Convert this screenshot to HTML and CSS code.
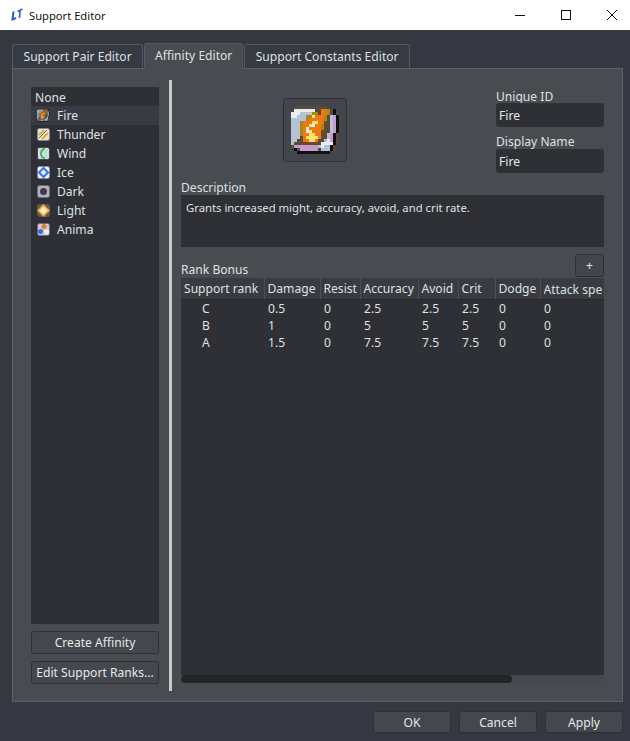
FILE: index.html
```html
<!DOCTYPE html>
<html lang="en">
<head>
  <meta charset="UTF-8">
  <title>Support Editor</title>
  <link rel="stylesheet" href="styles.css">
</head>
<body>
  <div class="titlebar">
    <svg class="app-icon" viewBox="0 0 14 14" width="14" height="14">
      <path d="M3.5 3.5 L2.5 11.5 L6 10" fill="none" stroke="#2a5bd7" stroke-width="2"/>
      <path d="M7.5 3.5 L12.5 1 M10 2.5 L9.5 10" fill="none" stroke="#2a6ad7" stroke-width="1.7"/>
    </svg>
    <span class="title">Support Editor</span>
    <div class="win-buttons">
      <svg viewBox="0 0 12 12" width="12" height="12"><path d="M1 6.5H11" stroke="#111" fill="none"/></svg>
      <svg viewBox="0 0 12 12" width="12" height="12"><rect x="1.5" y="1.5" width="9" height="9" stroke="#111" fill="none"/></svg>
      <svg viewBox="0 0 12 12" width="12" height="12"><path d="M1 1L11 11M11 1L1 11" stroke="#111" fill="none"/></svg>
    </div>
  </div>

  <div class="window">
    <div class="tabs">
      <div class="tab">Support Pair Editor</div>
      <div class="tab active">Affinity Editor</div>
      <div class="tab">Support Constants Editor</div>
    </div>

    <div class="pane">
      <div class="left">
        <ul class="list">
          <li class="none">None</li>
          <li class="selected"><svg class="swatch pixel-fire" viewBox="0 0 16 16"></svg>Fire</li>
          <li>
            <svg class="swatch" viewBox="0 0 13 13">
              <rect x="0.5" y="0.5" width="12" height="12" rx="2" fill="#e9e4d8" stroke="#8d8794"/>
              <path d="M2 7L7 2M5 11L11 5" stroke="#d8b23c" stroke-width="2"/>
              <path d="M2 10L10 2" stroke="#6b5a3a"/>
            </svg>Thunder
          </li>
          <li>
            <svg class="swatch" viewBox="0 0 13 13">
              <rect x="0.5" y="0.5" width="12" height="12" rx="2" fill="#ded8ea" stroke="#44445a"/>
              <path d="M8 1.5C2.5 3.5 2.5 9.5 8 11.5" fill="none" stroke="#38c060" stroke-width="2"/>
              <path d="M11 3C7 5 7 8 11 10" fill="none" stroke="#a6e8b0" stroke-width="1.5"/>
            </svg>Wind
          </li>
          <li>
            <svg class="swatch" viewBox="0 0 13 13">
              <rect x="0.5" y="0.5" width="12" height="12" rx="2" fill="#f0f2fa" stroke="#8088a8"/>
              <path d="M6.5 0.5L12.5 6.5L6.5 12.5L0.5 6.5Z" fill="#3a78e8"/>
              <path d="M6.5 3.5L9.5 6.5L6.5 9.5L3.5 6.5Z" fill="#e4eefc"/>
            </svg>Ice
          </li>
          <li>
            <svg class="swatch" viewBox="0 0 13 13">
              <rect x="0.5" y="0.5" width="12" height="12" rx="2" fill="#b6aec8" stroke="#70697c"/>
              <circle cx="6.5" cy="6.5" r="3.5" fill="#3f3a44"/>
            </svg>Dark
          </li>
          <li>
            <svg class="swatch" viewBox="0 0 13 13">
              <rect x="0.5" y="0.5" width="12" height="12" rx="2" fill="#6a5a50" stroke="#5c5660"/>
              <path d="M6.5 0L13 6.5L6.5 13L0 6.5Z" fill="#f0a83c"/>
              <path d="M6.5 2.5L10.5 6.5L6.5 10.5L2.5 6.5Z" fill="#fff2b8"/>
            </svg>Light
          </li>
          <li>
            <svg class="swatch" viewBox="0 0 13 13">
              <rect x="0.5" y="0.5" width="12" height="12" rx="2" fill="#cfc8da" stroke="#6f6a80"/>
              <circle cx="7" cy="3.5" r="2.5" fill="#e8782a"/>
              <circle cx="3.5" cy="8.5" r="2.5" fill="#2f6fe0"/>
              <circle cx="9.5" cy="9" r="2.5" fill="#f4efc8"/>
            </svg>Anima
          </li>
        </ul>
        <button class="btn">Create Affinity</button>
        <button class="btn">Edit Support Ranks...</button>
      </div>

      <div class="splitter"></div>

      <div class="right">
        <div class="top-row">
          <div class="icon-box">
            <svg class="pixel-fire crisp" viewBox="0 0 16 16" width="48" height="48"></svg>
          </div>
          <div class="id-fields">
            <label class="first">Unique ID</label>
            <input class="field" value="Fire">
            <label class="second">Display Name</label>
            <input class="field" value="Fire">
          </div>
        </div>

        <label>Description</label>
        <div class="desc">Grants increased might, accuracy, avoid, and crit rate.</div>

        <div class="rank-head">
          <label>Rank Bonus</label>
          <button class="plus">+</button>
        </div>

        <div class="table-box">
          <table>
            <thead>
              <tr>
                <th class="c0">Support rank</th>
                <th class="c1">Damage</th>
                <th class="c2">Resist</th>
                <th class="c3">Accuracy</th>
                <th class="c4">Avoid</th>
                <th class="c5">Crit</th>
                <th class="c6">Dodge</th>
                <th class="c7"><span class="clip">Attack spe</span></th>
              </tr>
            </thead>
            <tbody>
              <tr><td class="rank">C</td><td>0.5</td><td>0</td><td>2.5</td><td>2.5</td><td>2.5</td><td>0</td><td>0</td></tr>
              <tr><td class="rank">B</td><td>1</td><td>0</td><td>5</td><td>5</td><td>5</td><td>0</td><td>0</td></tr>
              <tr><td class="rank">A</td><td>1.5</td><td>0</td><td>7.5</td><td>7.5</td><td>7.5</td><td>0</td><td>0</td></tr>
            </tbody>
          </table>
          <div class="scroll"><div class="thumb"></div></div>
        </div>
      </div>
    </div>

    <div class="footer">
      <button class="btn wide">OK</button>
      <button class="btn wide">Cancel</button>
      <button class="btn wide">Apply</button>
    </div>
  </div>
  <script src="icons.js"></script>
</body>
</html>
```
FILE: styles.css
```css
* {
  box-sizing: border-box;
}

html,
body {
  margin: 0;
  height: 741px;
  overflow: hidden;
}

body {
  background-color: #353840;
  color: #dfe1e3;
  font-family: "Noto Sans", sans-serif;
  font-size: 12.1px;
}

.titlebar {
  display: flex;
  align-items: center;
  height: 30px;
  padding-left: 10px;
  background-color: #fff;
  color: #111;
  font-size: 11.2px;
}

.title {
  margin-left: 5px;
}

.win-buttons {
  display: flex;
  gap: 34px;
  margin-left: auto;
  margin-right: 12px;
}

.window {
  padding: 12px 7px 0 12px;
}

.tabs {
  display: flex;
  align-items: flex-end;
  height: 26px;
}

.tab {
  height: 24px;
  padding: 3px 10.5px 0;
  margin-right: 1px;
  background-color: #373a42;
  border: 1px solid #55585e;
  border-bottom: none;
  border-radius: 3px 3px 0 0;
}

.tab.active {
  position: relative;
  width: 99px;
  height: 26px;
  margin-bottom: -1px;
  padding: 3px 0 0;
  background-color: #484b50;
  text-align: center;
}

.pane {
  display: flex;
  height: 634px;
  padding: 11px 18px 10px;
  background-color: #484b50;
  border: 1px solid #5c5f64;
}

.left {
  display: flex;
  flex-direction: column;
  width: 128px;
  padding: 7px 0;
}

.list {
  flex: 1;
  margin: 0;
  padding: 0;
  list-style: none;
  background-color: #2e3036;
}

.list li {
  display: flex;
  align-items: center;
  height: 19px;
  padding-left: 4px;
}

.list .none {
  padding-top: 2px;
}

.list .selected {
  background-color: #383b43;
}

.swatch {
  flex: none;
  width: 13px;
  height: 13px;
  margin: 0 7px 0 2px;
}

.btn {
  height: 23px;
  margin-top: 7px;
  padding: 0;
  background-color: #44474d;
  border: 1px solid #2e3036;
  border-radius: 3px;
  color: #e6e7e8;
  font-family: inherit;
  font-size: 12.1px;
  white-space: nowrap;
}

.splitter {
  width: 3px;
  margin: 0 9px 0 10px;
  background-color: #c9cacb;
}

.right {
  display: flex;
  flex-direction: column;
  flex: 1;
  padding: 7px 0 8px;
}

.top-row {
  display: flex;
  height: 92px;
}

.icon-box {
  display: flex;
  align-items: center;
  justify-content: center;
  width: 64px;
  height: 64px;
  margin: 11px 0 0 102px;
  background-color: #42454b;
  border: 1px solid #2e3036;
  border-radius: 3px;
}

.crisp {
  shape-rendering: crispEdges;
}

.id-fields {
  display: flex;
  flex-direction: column;
  width: 108px;
  margin-left: auto;
}

label {
  display: block;
  line-height: 18px;
  margin-bottom: -2px;
}

.first {
  margin-bottom: -3px;
  padding-top: 1px;
}

.second {
  margin-top: 6px;
}

.field {
  flex: none;
  width: 108px;
  height: 24px;
  padding: 0 3px;
  background-color: #2e3036;
  border: none;
  border-radius: 3px;
  color: #e6e7e8;
  font-family: inherit;
  font-size: 12.1px;
}

.desc {
  height: 52px;
  padding: 5px 5px 0;
  background-color: #2e3036;
  font-size: 11.3px;
}

.rank-head {
  display: flex;
  align-items: flex-end;
  justify-content: space-between;
  height: 31px;
  padding-bottom: 1px;
}

.plus {
  width: 29px;
  height: 23px;
  padding: 0;
  background-color: #42454b;
  border: 1px solid #2e3036;
  border-radius: 3px;
  color: #eee;
  font-family: inherit;
  font-size: 12.1px;
}

.table-box {
  display: flex;
  flex-direction: column;
  flex: 1;
  overflow: hidden;
  background-color: #2e3036;
}

table {
  flex: none;
  width: 423px;
  border-collapse: collapse;
  table-layout: fixed;
  white-space: nowrap;
}

th {
  height: 21px;
  padding: 1px 3px 0;
  background-color: #383b41;
  border-right: 1px solid #4c4f55;
  border-bottom: 1px solid #24262a;
  font-weight: normal;
  text-align: left;
}

th.c7 {
  padding-right: 0;
  border-right: none;
}

.clip {
  display: block;
  height: 16px;
  overflow: hidden;
}

.c0 { width: 83px; }
.c1 { width: 56px; }
.c2 { width: 40px; }
.c3 { width: 58px; }
.c4 { width: 40px; }
.c5 { width: 37px; }
.c6 { width: 45px; }
.c7 { width: 64px; }

td {
  height: 17px;
  padding: 0 4px;
  line-height: 17px;
}

td.rank {
  padding-left: 21px;
}

.scroll {
  height: 8px;
  margin-top: auto;
  background-color: #45484e;
}

.thumb {
  width: 331px;
  height: 8px;
  background-color: #222428;
  border-radius: 4px;
}

.footer {
  display: flex;
  justify-content: flex-end;
  gap: 8px;
  margin-top: 9px;
}

.btn.wide {
  width: 78px;
  height: 22px;
  margin-top: 0;
}
```
FILE: icons.js
```js
// fire affinity icon, 16x16 pixel art
var colors = {
  b: "#5a4a3e",
  w: "#e8edf2",
  l: "#b4c3d2",
  p: "#c59ad0",
  k: "#111111",
  G: "#a8861e",
  o: "#f0780f",
  y: "#f8e27a",
  d: "#6a4a22"
};

var fire = [
  ".bbbbbbbbbbb....",
  ".wwwwwwwbbooGbk.",
  "wwwllllGGbooGbkb",
  "wwlllGGyoooGblpk",
  "lllllGoooooGblpk",
  "lllGoooyyoodblpk",
  "lllGooywooGdblpk",
  "lllGowooooGdblpk",
  "lllGowyoooddblpk",
  "lllGooyyoodblpkb",
  "lllboyyyyodblpkb",
  "llbbooyyobblwpkb",
  "lbdddddddbwwwwkb",
  "bpppppppplwllkb.",
  ".kbppppppblllkb.",
  "..kkkkkkkkkkk..."
];

document.querySelectorAll(".pixel-fire").forEach(function (svg) {
  fire.forEach(function (row, y) {
    row.split("").forEach(function (c, x) {
      if (c === ".") return;
      var r = document.createElementNS("http://www.w3.org/2000/svg", "rect");
      r.setAttribute("x", x);
      r.setAttribute("y", y);
      r.setAttribute("width", 1);
      r.setAttribute("height", 1);
      r.setAttribute("fill", colors[c]);
      svg.appendChild(r);
    });
  });
});
```
